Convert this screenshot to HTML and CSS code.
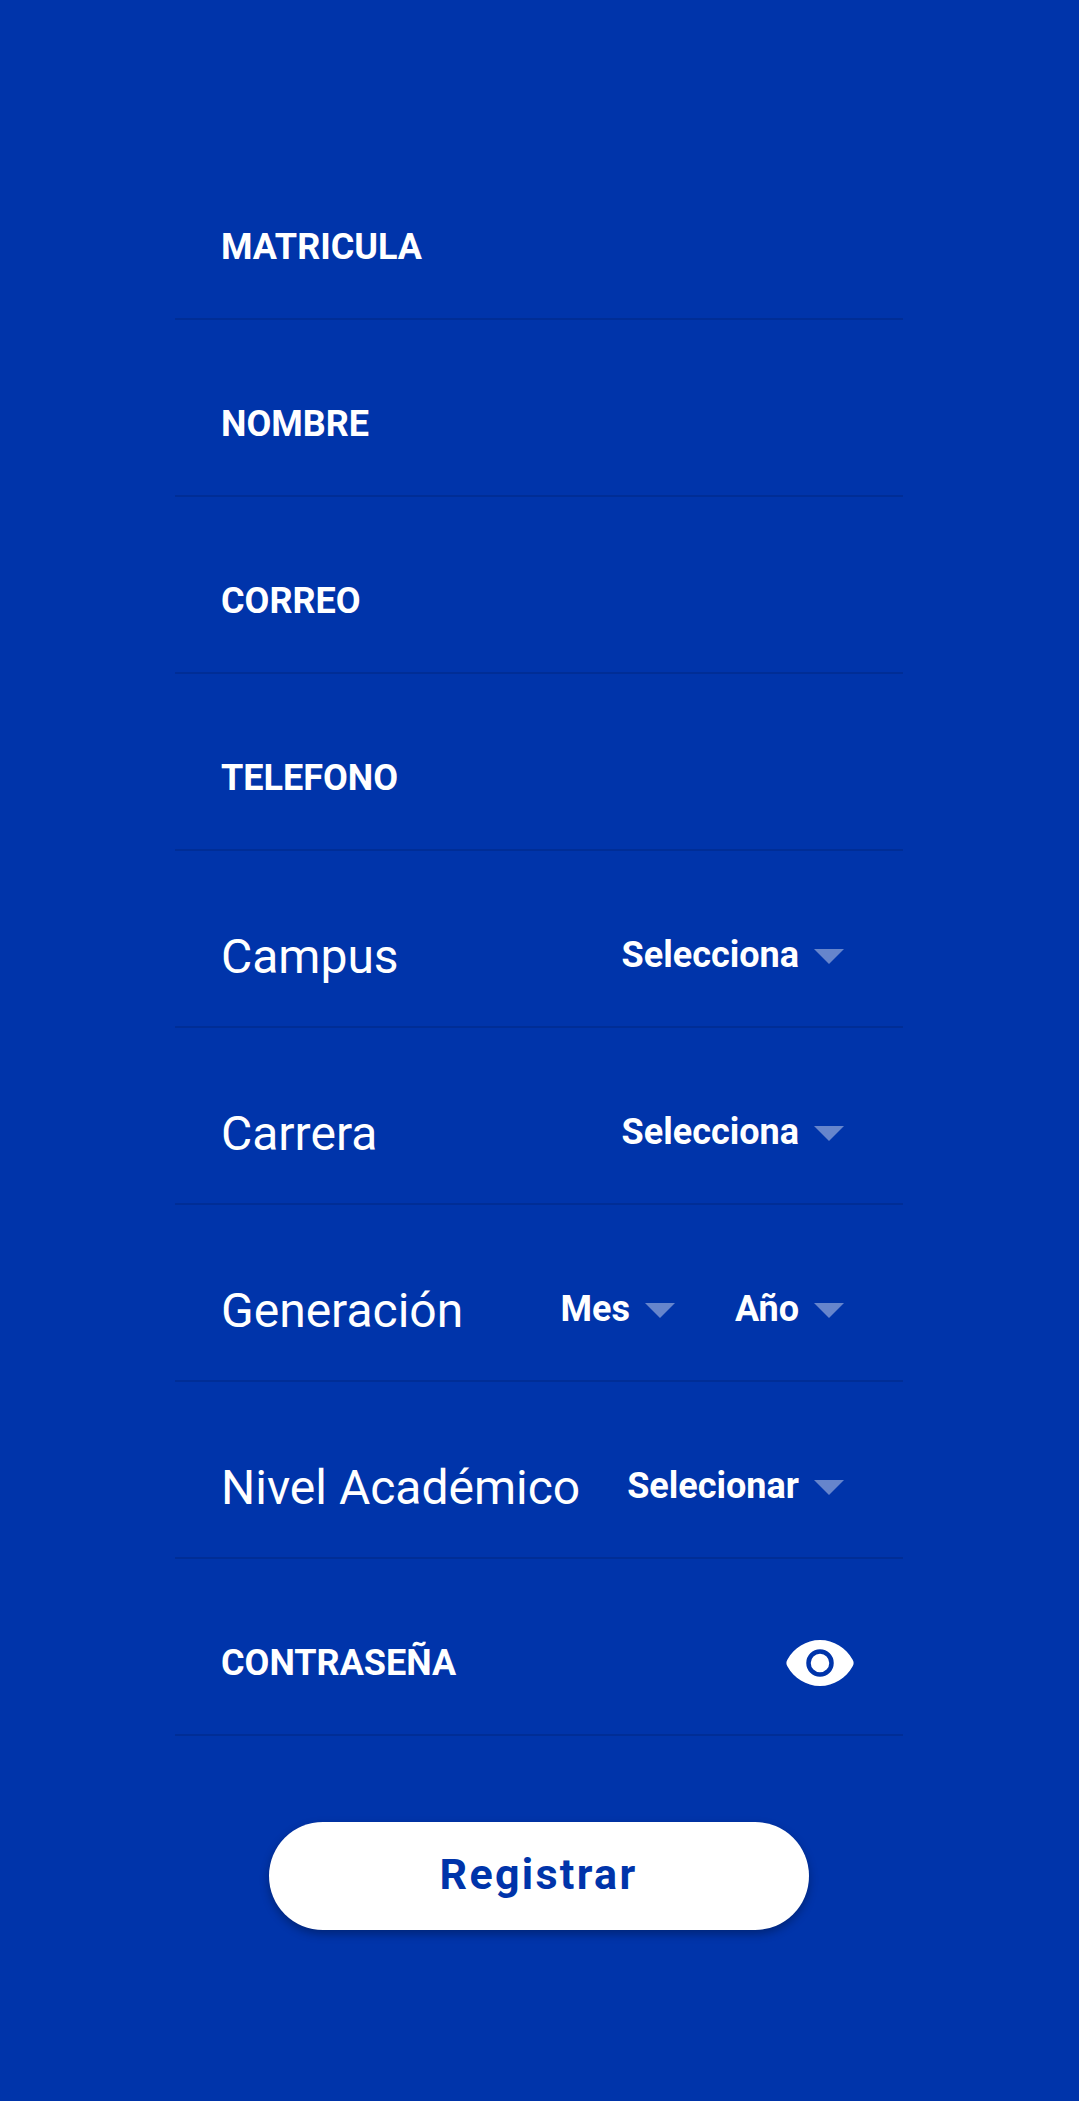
FILE: index.html
```html
<!DOCTYPE html>
<html>
<head>
<meta name="viewport" content="width=device-width, initial-scale=1">
<link rel="stylesheet" href="styles.css">
</head>
<body>

<form class="form">
  <div class="row"><span class="label">MATRICULA</span></div>
  <div class="row"><span class="label">NOMBRE</span></div>
  <div class="row"><span class="label">CORREO</span></div>
  <div class="row"><span class="label">TELEFONO</span></div>

  <div class="row">
    <span class="title">Campus</span>
    <div class="selects">
      <div class="select"><span>Selecciona</span><i class="arrow"></i></div>
    </div>
  </div>

  <div class="row">
    <span class="title">Carrera</span>
    <div class="selects">
      <div class="select"><span>Selecciona</span><i class="arrow"></i></div>
    </div>
  </div>

  <div class="row">
    <span class="title">Generación</span>
    <div class="selects">
      <div class="select"><span>Mes</span><i class="arrow"></i></div>
      <div class="select"><span>Año</span><i class="arrow"></i></div>
    </div>
  </div>

  <div class="row">
    <span class="title">Nivel Académico</span>
    <div class="selects">
      <div class="select"><span>Selecionar</span><i class="arrow"></i></div>
    </div>
  </div>

  <div class="row">
    <span class="label">CONTRASEÑA</span>
    <svg class="eye" viewBox="0 0 68 46" width="68" height="46">
      <path fill="#fff" d="M1.5 19.5C8 8 20 0 34 0s26 8 32.500 19.500c1.500 2.500 1.500 4.500 0 7C60 38 48 46 34 46S8 38 1.500 26.500c-1.500-2.500-1.500-4.500 0-7z"/>
      <circle cx="34" cy="23" r="11.500" fill="none" stroke="#0034aa" stroke-width="4.500"/>
    </svg>
  </div>

  <div class="actions">
    <button type="button" class="submit">Registrar</button>
  </div>
</form>

</body>
</html>
```

FILE: styles.css
```css
html, body {
  margin: 0;
  padding: 0;
}

body {
  background: #0034aa;
  font-family: Roboto, "Liberation Sans", sans-serif;
  color: #fff;
  min-height: 2101px;
}

.form {
  width: 728px;
  margin-left: 175px;
  padding-top: 143px;
}

.row {
  display: flex;
  align-items: center;
  justify-content: space-between;
  box-sizing: border-box;
  height: 177px;
  padding: 32px 59px 0 46px;
  border-bottom: 2px solid #002d96;
}

.label {
  font-size: 36px;
  font-weight: 700;
}

.title {
  margin-top: 3px;
  font-size: 48px;
  font-weight: 400;
}

.selects {
  display: flex;
  gap: 60px;
}

.select {
  display: flex;
  align-items: center;
  gap: 15px;
  font-size: 36px;
  font-weight: 700;
}

.arrow {
  width: 0;
  height: 0;
  margin-top: 4px;
  border-left: 15px solid transparent;
  border-right: 15px solid transparent;
  border-top: 15px solid rgba(255, 255, 255, 0.4);
}

.eye {
  margin-right: -10px;
}

.actions {
  display: flex;
  justify-content: center;
  padding-top: 86px;
}

.submit {
  width: 540px;
  height: 108px;
  margin-left: -1px;
  padding: 0 0 4px;
  border: 0;
  border-radius: 54px;
  background: #fff;
  color: #0034aa;
  font-family: inherit;
  font-size: 43px;
  font-weight: 700;
  letter-spacing: 2.3px;
  box-shadow: 0 4px 10px rgba(0, 0, 0, 0.3);
}
```
